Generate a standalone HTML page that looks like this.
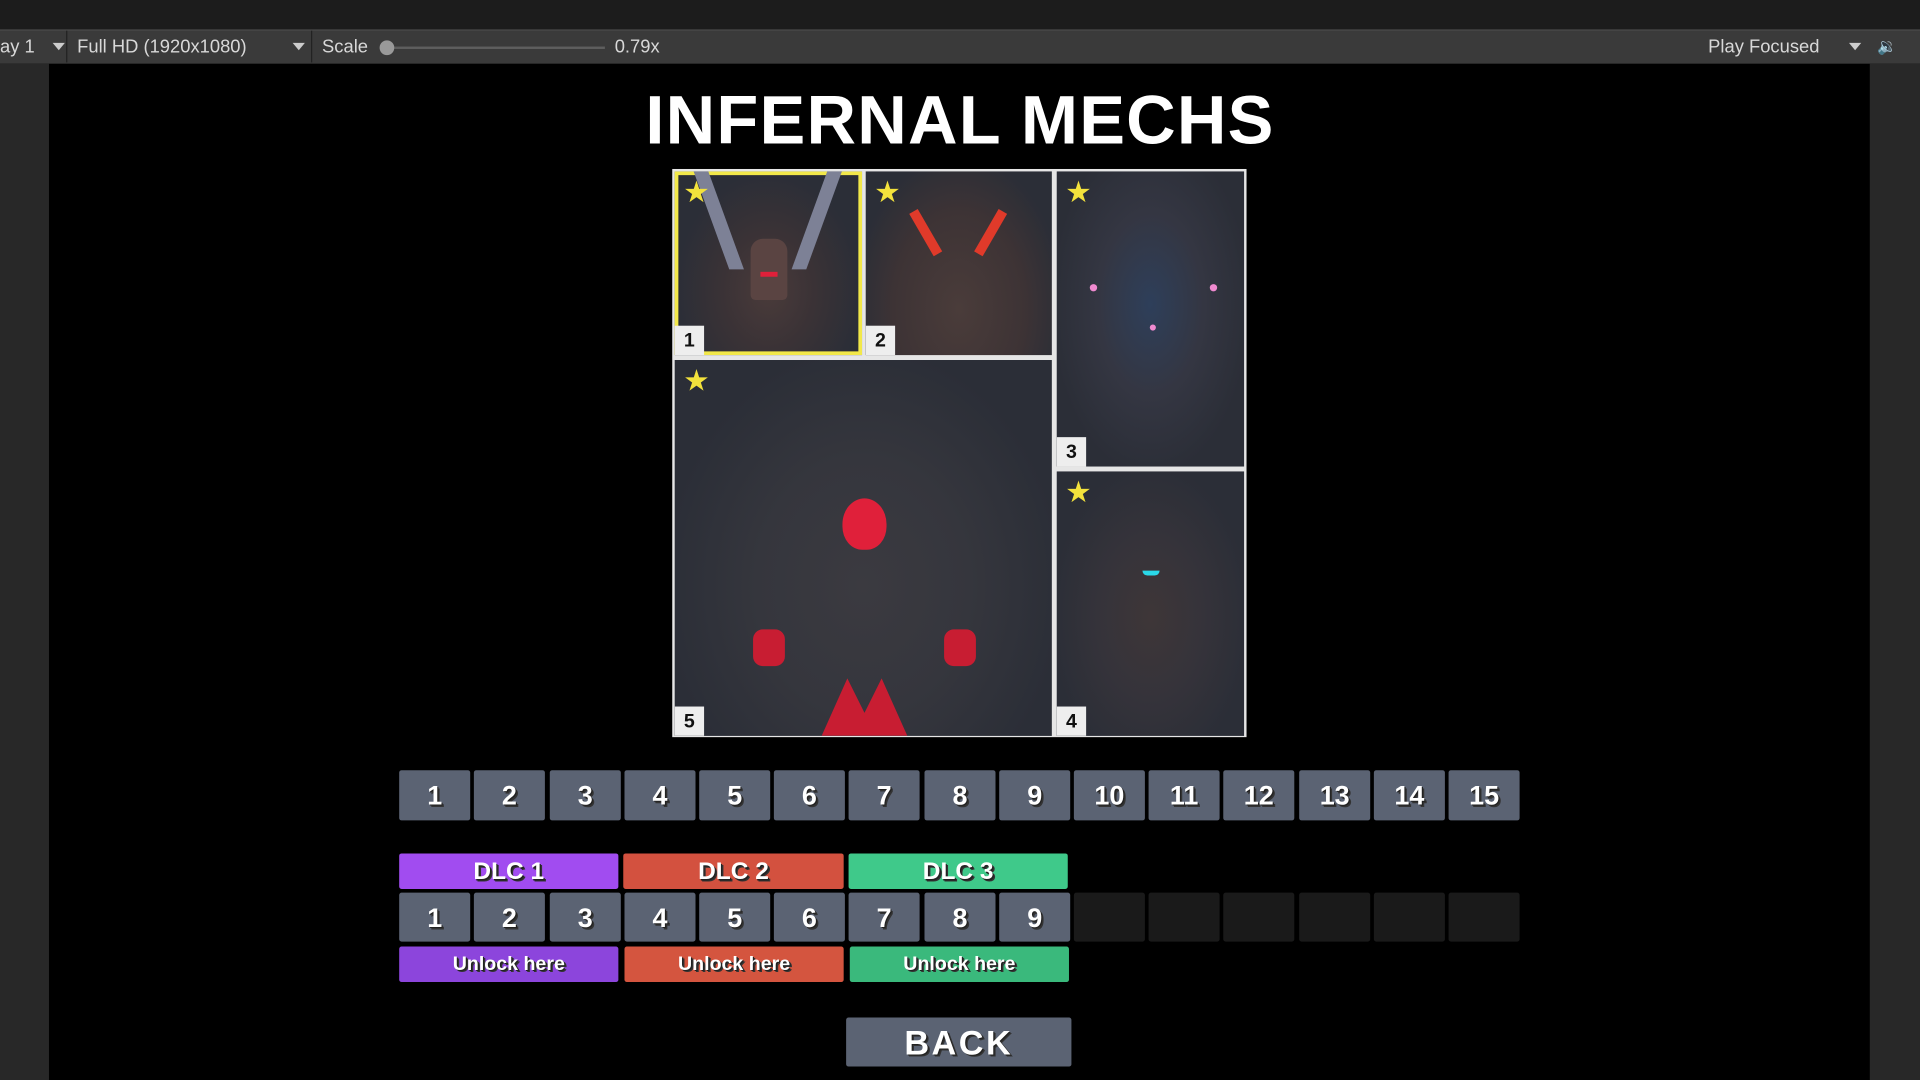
<!DOCTYPE html>
<html><head><meta charset="utf-8"><style>
html,body{margin:0;padding:0;width:1920px;height:1080px;overflow:hidden;background:#000}
#w{position:absolute;left:0;top:0;width:1568px;height:882px;transform:scale(1.22449);transform-origin:0 0;font-family:"Liberation Sans",sans-serif;background:#000}
.a{position:absolute}
.tb{color:#d8d8d8;font-size:15px;top:30px}
.cell{position:absolute;background:#2b2e37;overflow:hidden}
.num{position:absolute;left:0;bottom:0;width:24px;height:24px;background:#eee;color:#111;font:bold 16px "Liberation Sans",sans-serif;text-align:center;line-height:25px}
.star{position:absolute;left:7px;top:6px;color:#f3e23c;font-size:24px;line-height:24px}
.b{position:absolute;height:41px;width:58px;background:#5b6373;border-radius:2px;color:#fff;font:bold 22px "Liberation Sans",sans-serif;text-align:center;line-height:42px;text-shadow:1px 1px 0 #222,2px 2px 0 #333}
.d{position:absolute;height:40px;width:58px;background:#1a1a1a;border-radius:2px}
.h{position:absolute;height:29px;border-radius:2px;color:#fff;font:bold 20px "Liberation Sans",sans-serif;text-align:center;line-height:30px;text-shadow:1px 1px 0 #222,2px 2px 0 #333}
.u{position:absolute;height:29px;border-radius:2px;color:#fff;font:bold 16px "Liberation Sans",sans-serif;text-align:center;line-height:30px;text-shadow:1px 1px 0 #222,2px 2px 0 #333}
</style></head><body><div id="w">
<div class="a" style="left:0;top:0;width:1568px;height:24px;background:#1c1c1c"></div>
<div class="a" style="left:0;top:24px;width:1568px;height:27px;background:#3a3a3a;border-top:1px solid #4a4a4a"></div>
<div class="a tb" style="left:0">ay 1</div>
<div class="a" style="left:43px;top:35px;border:5px solid transparent;border-top:6px solid #ccc"></div>
<div class="a" style="left:54px;top:25px;width:1px;height:26px;background:#222"></div>
<div class="a tb" style="left:63px">Full HD (1920x1080)</div>
<div class="a" style="left:239px;top:35px;border:5px solid transparent;border-top:6px solid #ccc"></div>
<div class="a" style="left:254px;top:25px;width:1px;height:26px;background:#222"></div>
<div class="a tb" style="left:263px">Scale</div>
<div class="a" style="left:316px;top:38px;width:178px;height:2px;background:#5e5e5e"></div>
<div class="a" style="left:310px;top:33px;width:12px;height:12px;border-radius:6px;background:#999"></div>
<div class="a tb" style="left:502px">0.79x</div>
<div class="a tb" style="left:1395px">Play Focused</div>
<div class="a" style="left:1510px;top:35px;border:5px solid transparent;border-top:6px solid #ccc"></div>
<div class="a tb" style="left:1533px;font-size:13px">&#128265;</div>
<div class="a" style="left:0;top:52px;width:40px;height:830px;background:#282828"></div>
<div class="a" style="left:1527px;top:52px;width:41px;height:830px;background:#282828"></div>

<div class="a" style="left:0;top:68px;width:1568px;text-align:center;color:#fff;font:900 56px 'Liberation Sans',sans-serif;letter-spacing:1px;line-height:60px">INFERNAL MECHS</div>

<div class="a" style="left:549px;top:138px;width:469px;height:464px;background:#e6e6e6"></div>
<div class="cell" style="left:551px;top:140px;width:153px;height:150px;box-shadow:inset 0 0 0 3px #f2e84a;background:radial-gradient(ellipse at 50% 65%,#4a3b3a 0,#3a3236 35%,#2b2e37 70%)">
 <div class="a" style="left:30px;top:0;width:12px;height:80px;background:#7d8196;transform:skewX(20deg)"></div>
 <div class="a" style="left:110px;top:0;width:12px;height:80px;background:#7d8196;transform:skewX(-20deg)"></div>
 <div class="a" style="left:62px;top:55px;width:30px;height:50px;background:#5a4442;border-radius:10px 10px 4px 4px"></div>
 <div class="a" style="left:70px;top:82px;width:14px;height:4px;background:#e0203a"></div>
 <div class="star">★</div><div class="num">1</div></div>
<div class="cell" style="left:707px;top:140px;width:152px;height:150px;background:radial-gradient(ellipse at 50% 75%,#4a3c3a 0,#3d3335 50%,#2b2e37 80%)">
 <div class="a" style="left:45px;top:30px;width:8px;height:40px;background:#e03a2a;transform:rotate(-30deg)"></div>
 <div class="a" style="left:98px;top:30px;width:8px;height:40px;background:#e03a2a;transform:rotate(30deg)"></div>
 <div class="star">★</div><div class="num">2</div></div>
<div class="cell" style="left:863px;top:140px;width:153px;height:241px;background:radial-gradient(ellipse at 50% 45%,#2e3f5a 0,#343642 40%,#2b2e37 75%)">
 <div class="a" style="left:27px;top:92px;width:6px;height:6px;border-radius:3px;background:#f08ad0"></div>
 <div class="a" style="left:125px;top:92px;width:6px;height:6px;border-radius:3px;background:#f08ad0"></div>
 <div class="a" style="left:76px;top:125px;width:5px;height:5px;border-radius:3px;background:#f08ad0"></div>
 <div class="star">★</div><div class="num">3</div></div>
<div class="cell" style="left:551px;top:294px;width:308px;height:307px;background:radial-gradient(ellipse at 50% 60%,#3b3a40 0,#35363d 40%,#2b2e37 75%)">
 <div class="a" style="left:137px;top:113px;width:36px;height:42px;border-radius:50% 50% 45% 45%;background:#e0203a"></div>
 <div class="a" style="left:64px;top:220px;width:26px;height:30px;border-radius:8px;background:#c81d32"></div>
 <div class="a" style="left:220px;top:220px;width:26px;height:30px;border-radius:8px;background:#c81d32"></div>
 <div class="a" style="left:120px;top:260px;width:70px;height:47px;background:#c81d32;clip-path:polygon(0 100%,30% 0,50% 60%,70% 0,100% 100%)"></div>
 <div class="star">★</div><div class="num">5</div></div>
<div class="cell" style="left:863px;top:385px;width:153px;height:216px;background:radial-gradient(ellipse at 50% 55%,#3e3638 0,#35333a 40%,#2b2e37 75%)">
 <div class="a" style="left:70px;top:81px;width:14px;height:4px;border-radius:0 0 6px 6px;background:#2ad8e8"></div>
 <div class="star">★</div><div class="num">4</div></div>

<div class="b" style="left:326px;top:629px">1</div><div class="b" style="left:387px;top:629px">2</div><div class="b" style="left:449px;top:629px">3</div><div class="b" style="left:510px;top:629px">4</div><div class="b" style="left:571px;top:629px">5</div><div class="b" style="left:632px;top:629px">6</div><div class="b" style="left:693px;top:629px">7</div><div class="b" style="left:755px;top:629px">8</div><div class="b" style="left:816px;top:629px">9</div><div class="b" style="left:877px;top:629px">10</div><div class="b" style="left:938px;top:629px">11</div><div class="b" style="left:999px;top:629px">12</div><div class="b" style="left:1061px;top:629px">13</div><div class="b" style="left:1122px;top:629px">14</div><div class="b" style="left:1183px;top:629px">15</div>

<div class="h" style="left:326px;top:697px;width:179px;background:#a14cf0">DLC 1</div>
<div class="h" style="left:509px;top:697px;width:180px;background:#d3513f">DLC 2</div>
<div class="h" style="left:693px;top:697px;width:179px;background:#3fc98a">DLC 3</div>

<div class="b" style="left:326px;top:729px;height:40px">1</div><div class="b" style="left:387px;top:729px;height:40px">2</div><div class="b" style="left:449px;top:729px;height:40px">3</div><div class="b" style="left:510px;top:729px;height:40px">4</div><div class="b" style="left:571px;top:729px;height:40px">5</div><div class="b" style="left:632px;top:729px;height:40px">6</div><div class="b" style="left:693px;top:729px;height:40px">7</div><div class="b" style="left:755px;top:729px;height:40px">8</div><div class="b" style="left:816px;top:729px;height:40px">9</div>
<div class="d" style="left:877px;top:729px"></div><div class="d" style="left:938px;top:729px"></div><div class="d" style="left:999px;top:729px"></div><div class="d" style="left:1061px;top:729px"></div><div class="d" style="left:1122px;top:729px"></div><div class="d" style="left:1183px;top:729px"></div>

<div class="u" style="left:326px;top:773px;width:179px;background:#8c45dc">Unlock here</div>
<div class="u" style="left:510px;top:773px;width:179px;background:#d4553f">Unlock here</div>
<div class="u" style="left:694px;top:773px;width:179px;background:#3ab97c">Unlock here</div>

<div class="b" style="left:691px;top:831px;width:184px;height:40px;font-size:28px;line-height:41px;letter-spacing:2px">BACK</div>
</div></body></html>
